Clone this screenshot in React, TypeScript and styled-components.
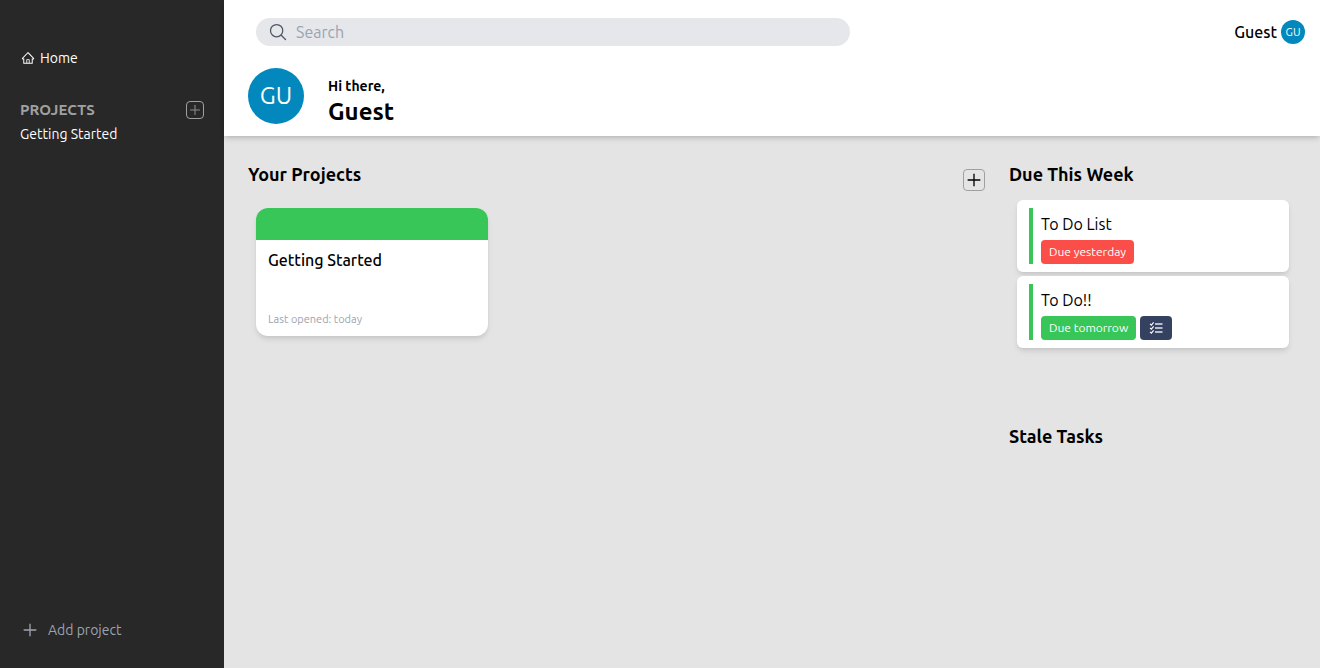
import React from "react";
import styled, { createGlobalStyle } from "styled-components";
import { AiOutlineHome, AiOutlinePlus } from "react-icons/ai";
import { IoSearchOutline } from "react-icons/io5";

const GlobalStyle = createGlobalStyle`
  *, *::before, *::after { box-sizing: border-box; }
  body {
    margin: 0;
    background: #e4e4e4;
    color: #000;
    font-family: Ubuntu, "Noto Sans", sans-serif;
    font-size: 16px;
    line-height: 24px;
  }
  h1, h2, h3, p, ul { margin: 0; padding: 0; }
  ul { list-style: none; }
  button, input { font: inherit; }
  svg { display: block; flex: none; }
`;

const Page = styled.div`
  display: flex;
  min-height: 100vh;
`;

const Sidebar = styled.nav`
  flex: none;
  width: 224px;
  padding: 46px 20px 26px;
  display: flex;
  flex-direction: column;
  background: #282828;
  color: #fff;
  font-size: 14px;
`;

const SidebarLink = styled.a`
  display: flex;
  align-items: center;
  gap: 4px;
  color: inherit;
  text-decoration: none;

  svg { margin: 0 1px; }
`;

const SidebarSection = styled.section`
  flex: 1;
  margin-top: 28px;
`;

const SidebarHeading = styled.div`
  display: flex;
  align-items: center;
  justify-content: space-between;

  h2 {
    color: #a0a0a0;
    font-size: 15px;
    line-height: 24px;
    font-weight: 700;
  }
`;

const SquareButton = styled.button<{ $size: number; $tone: string }>`
  flex: none;
  width: ${(p) => p.$size}px;
  height: ${(p) => p.$size}px;
  padding: 0;
  display: grid;
  place-items: center;
  background: transparent;
  border: 1px solid #a0a0a0;
  border-radius: 4px;
  color: ${(p) => p.$tone};
  cursor: pointer;
`;

const AddProject = styled.button`
  display: flex;
  align-items: center;
  gap: 9px;
  padding: 0 1px;
  border: 0;
  background: transparent;
  color: #9ca3af;
  line-height: 24px;
  cursor: pointer;
`;

const Content = styled.div`
  flex: 1;
  min-width: 0;
`;

const Header = styled.header`
  padding: 18px 15px 12px 24px;
  background: #fff;
  box-shadow: 0 4px 6px -1px rgba(0, 0, 0, 0.1), 0 2px 4px -1px rgba(0, 0, 0, 0.12);
`;

const TopBar = styled.div`
  display: flex;
  align-items: center;
  justify-content: space-between;
  padding-left: 8px;
`;

const SearchBox = styled.label`
  display: flex;
  align-items: center;
  gap: 8px;
  width: 45vw;
  height: 28px;
  padding: 0 12px;
  border-radius: 14px;
  background: #e5e7eb;
  color: #4b5563;

  input {
    flex: 1;
    min-width: 0;
    padding: 0;
    border: 0;
    outline: 0;
    background: transparent;
    color: #000;
  }
  input::placeholder { color: #9ca3af; opacity: 1; }
`;

const Account = styled.div`
  display: flex;
  align-items: center;
  gap: 4px;
  font-weight: 500;
`;

const Avatar = styled.span<{ $size: number; $text: number }>`
  flex: none;
  width: ${(p) => p.$size}px;
  height: ${(p) => p.$size}px;
  display: grid;
  place-items: center;
  border-radius: 50%;
  background: #0288bc;
  color: #fff;
  font-size: ${(p) => p.$text}px;
  font-weight: 400;
`;

const Greeting = styled.div`
  display: flex;
  align-items: flex-end;
  gap: 24px;
  margin-top: 22px;

  p {
    margin-bottom: 4px;
    font-size: 14px;
    line-height: 20px;
    font-weight: 700;
  }
  h1 {
    font-size: 24px;
    line-height: 24px;
    font-weight: 700;
  }
`;

const Board = styled.main`
  display: flex;
  gap: 24px;
  padding: 24px 23px 24px 24px;
`;

const Projects = styled.section`
  flex: 1;
  min-width: 0;
`;

const SectionBar = styled.div`
  display: flex;
  justify-content: space-between;
  align-items: flex-end;
  height: 31px;
`;

const SectionTitle = styled.h2`
  align-self: flex-start;
  font-size: 18px;
  line-height: 28px;
  font-weight: 700;
`;

const ProjectGrid = styled.ul`
  display: flex;
  flex-wrap: wrap;
  gap: 16px;
  padding: 17px 8px;
`;

const ProjectCard = styled.li`
  width: 232px;
  height: 128px;
  display: flex;
  flex-direction: column;
  overflow: hidden;
  border-radius: 12px;
  background: #fff;
  box-shadow: 0 4px 6px -1px rgba(0, 0, 0, 0.1), 0 2px 4px -1px rgba(0, 0, 0, 0.06);

  &::before {
    content: "";
    height: 32px;
    background: #37c657;
  }
  h3 {
    flex: 1;
    padding: 8px 12px;
    font-size: 16px;
    line-height: 24px;
    font-weight: 500;
  }
  p {
    padding: 0 12px 8px;
    color: #9ca3af;
    font-size: 11px;
    line-height: 18px;
  }
`;

const Agenda = styled.aside`
  flex: none;
  width: 288px;
`;

const AgendaSection = styled.section`
  min-height: 262px;
`;

const TaskList = styled.ul`
  display: grid;
  gap: 4px;
  padding: 12px 8px;
`;

const TaskCard = styled.li`
  padding: 8px 12px;
  border-radius: 6px;
  background: #fff;
  box-shadow: 0 4px 6px -1px rgba(0, 0, 0, 0.1), 0 2px 4px -1px rgba(0, 0, 0, 0.06);
`;

const TaskBody = styled.div`
  padding: 4px 0 0 8px;
  border-left: 4px solid #37c657;

  h3 {
    font-size: 16px;
    line-height: 24px;
    font-weight: 400;
  }
`;

const Tags = styled.div`
  display: flex;
  gap: 4px;
  margin-top: 4px;
`;

const Tag = styled.span<{ $color: string }>`
  display: flex;
  align-items: center;
  height: 24px;
  padding: 0 8px;
  border-radius: 4px;
  background: ${(p) => p.$color};
  color: #fff;
  font-size: 12px;
`;

function ChecklistIcon() {
  return (
    <svg width="16" height="16" viewBox="0 0 16 16" fill="none" stroke="currentColor" role="img" aria-label="Checklist">
      {[4, 8, 12].map((y) => (
        <g key={y}>
          <path d={`M2 ${y - 0.2}l1.4 1.4l2.2 -2.8`} strokeWidth="1.1" />
          <path d={`M7 ${y}h7.5`} strokeWidth="1.3" />
        </g>
      ))}
    </svg>
  );
}

export default function App() {
  return (
    <>
      <GlobalStyle />
      <Page>
        <Sidebar>
          <SidebarLink href="#home">
            <AiOutlineHome size={14} />
            Home
          </SidebarLink>
          <SidebarSection>
            <SidebarHeading>
              <h2>PROJECTS</h2>
              <SquareButton $size={18} $tone="#8c8c8c" aria-label="New project">
                <AiOutlinePlus size={14} />
              </SquareButton>
            </SidebarHeading>
            <SidebarLink href="#getting-started">Getting Started</SidebarLink>
          </SidebarSection>
          <AddProject>
            <AiOutlinePlus size={18} />
            Add project
          </AddProject>
        </Sidebar>
        <Content>
          <Header>
            <TopBar>
              <SearchBox>
                <IoSearchOutline size={20} />
                <input type="text" placeholder="Search" aria-label="Search" />
              </SearchBox>
              <Account>
                Guest
                <Avatar $size={24} $text={11}>GU</Avatar>
              </Account>
            </TopBar>
            <Greeting>
              <Avatar $size={56} $text={24}>GU</Avatar>
              <div>
                <p>Hi there,</p>
                <h1>Guest</h1>
              </div>
            </Greeting>
          </Header>
          <Board>
            <Projects>
              <SectionBar>
                <SectionTitle>Your Projects</SectionTitle>
                <SquareButton $size={22} $tone="#000" aria-label="Create project">
                  <AiOutlinePlus size={18} />
                </SquareButton>
              </SectionBar>
              <ProjectGrid>
                <ProjectCard>
                  <h3>Getting Started</h3>
                  <p>Last opened: today</p>
                </ProjectCard>
              </ProjectGrid>
            </Projects>
            <Agenda>
              <AgendaSection>
                <SectionTitle>Due This Week</SectionTitle>
                <TaskList>
                  <TaskCard>
                    <TaskBody>
                      <h3>To Do List</h3>
                      <Tags>
                        <Tag $color="#fc4e48">Due yesterday</Tag>
                      </Tags>
                    </TaskBody>
                  </TaskCard>
                  <TaskCard>
                    <TaskBody>
                      <h3>To Do!!</h3>
                      <Tags>
                        <Tag $color="#37c657">Due tomorrow</Tag>
                        <Tag $color="#344161">
                          <ChecklistIcon />
                        </Tag>
                      </Tags>
                    </TaskBody>
                  </TaskCard>
                </TaskList>
              </AgendaSection>
              <SectionTitle>Stale Tasks</SectionTitle>
            </Agenda>
          </Board>
        </Content>
      </Page>
    </>
  );
}
